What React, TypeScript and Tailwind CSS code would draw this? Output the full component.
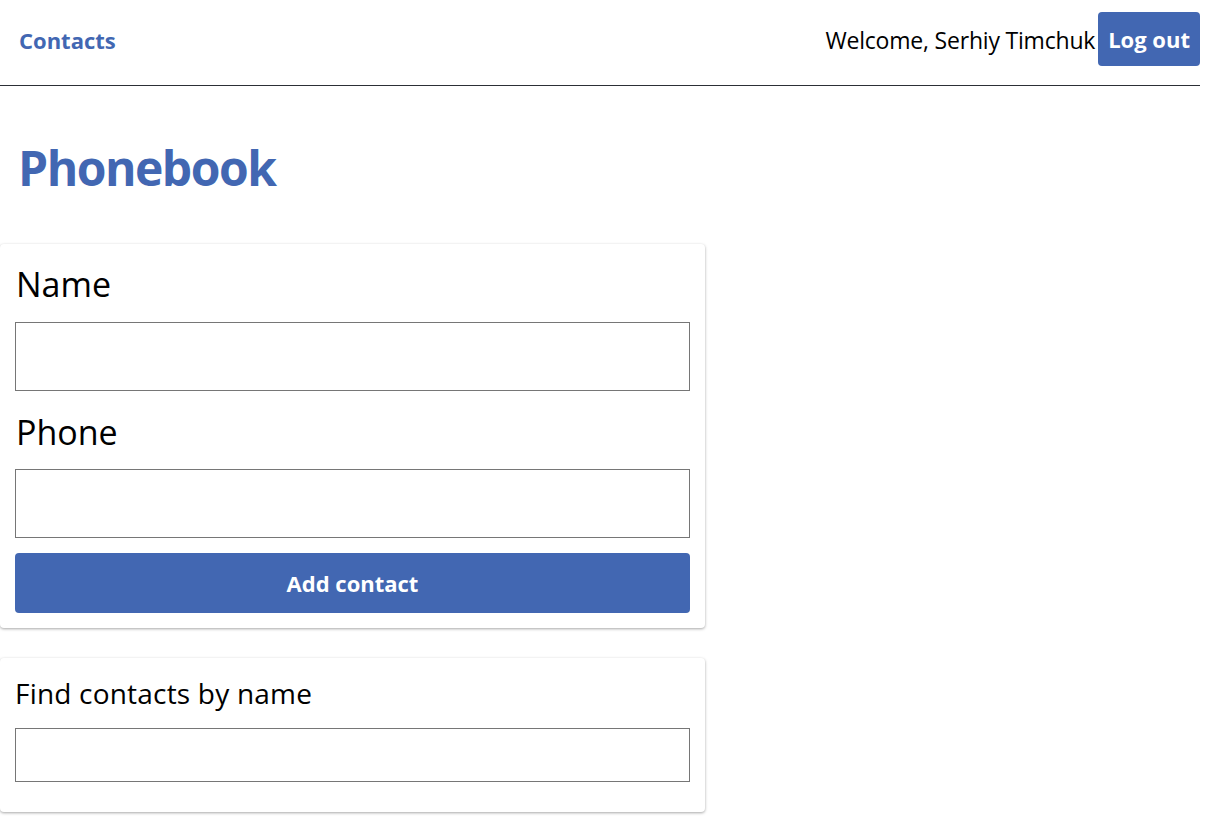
import React from "react";

export default function App() {
  return (
    <div className="w-[1213px] min-h-[835px] bg-white text-black" style={{ fontFamily: '"Open Sans", "Noto Sans", sans-serif' }}>
      <header className="w-[1200px] h-[86px] border-b border-[#2c2f36] flex items-start justify-between pt-[12px]">
        <a className="ml-[19px] mt-[12px] text-[22px] leading-[32px] font-bold text-[#4267b2]">Contacts</a>
        <div className="flex items-center gap-[3px]">
          <span className="text-[23px] leading-[32px] tracking-[-0.2px] pt-[2px]">Welcome, Serhiy Timchuk</span>
          <button className="h-[54px] px-[10px] rounded-[4px] bg-[#4267b2] text-white text-[22px] font-bold leading-[32px]">Log out</button>
        </div>
      </header>
      <main>
        <h1 className="ml-[18px] mt-[50px] text-[48px] leading-[64px] font-bold text-[#4267b2] tracking-[-1.5px]">Phonebook</h1>
        <form className="mt-[44px] w-[705px] rounded-[4px] bg-white shadow-[0_1px_3px_rgba(0,0,0,0.35)] p-[15px] flex flex-col">
          <label className="text-[34px] leading-[50px] pl-[1px] mb-[13px]">Name</label>
          <input className="h-[69px] w-full border border-[#767676] outline-none" />
          <label className="text-[34px] leading-[50px] mt-[16px] mb-[12px] pl-[1px]">Phone</label>
          <input className="h-[69px] w-full border border-[#767676] outline-none" />
          <button type="button" className="mt-[15px] h-[60px] w-full rounded-[4px] bg-[#4267b2] text-white text-[22px] font-bold">Add contact</button>
        </form>
        <div className="mt-[30px] w-[705px] rounded-[4px] bg-white shadow-[0_1px_3px_rgba(0,0,0,0.35)] pt-[15px] px-[15px] pb-[30px] flex flex-col">
          <label className="text-[28px] leading-[40px] mb-[15px] tracking-[0.2px]">Find contacts by name</label>
          <input className="h-[54px] w-full border border-[#767676] outline-none" />
        </div>
      </main>
    </div>
  );
}
